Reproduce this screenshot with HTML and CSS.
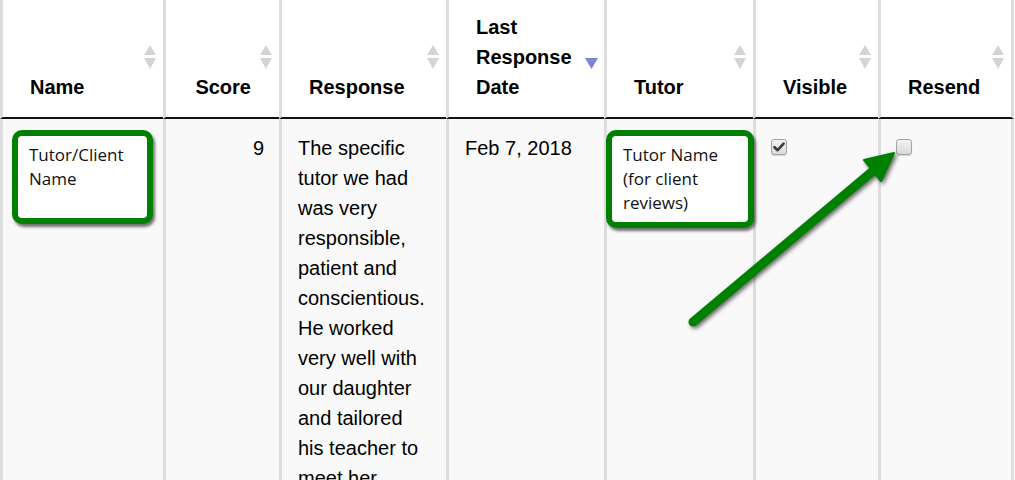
FILE: index.html
```html
<!DOCTYPE html>
<html>
<head>
<meta charset="utf-8">
<link rel="stylesheet" href="styles.css">
</head>
<body>
<div class="page">
  <table class="grid">
    <colgroup>
      <col class="c-name"><col class="c-score"><col class="c-resp"><col class="c-date"><col class="c-tutor"><col class="c-vis"><col class="c-resend">
    </colgroup>
    <thead>
      <tr>
        <th>Name<span class="sort"><svg width="12" height="24" viewBox="0 0 12 24"><path d="M0 10 L6 0 L12 10Z M0 13 L12 13 L6 24Z" fill="#d4d4d4"/></svg></span></th>
        <th class="num">Score<span class="sort"><svg width="12" height="24" viewBox="0 0 12 24"><path d="M0 10 L6 0 L12 10Z M0 13 L12 13 L6 24Z" fill="#d4d4d4"/></svg></span></th>
        <th>Response<span class="sort"><svg width="12" height="24" viewBox="0 0 12 24"><path d="M0 10 L6 0 L12 10Z M0 13 L12 13 L6 24Z" fill="#d4d4d4"/></svg></span></th>
        <th>Last Response Date<span class="sort sorted"><svg width="13" height="11" viewBox="0 0 13 11"><path d="M0 0 L13 0 L6.5 11Z" fill="#7e80dc"/></svg></span></th>
        <th>Tutor<span class="sort"><svg width="12" height="24" viewBox="0 0 12 24"><path d="M0 10 L6 0 L12 10Z M0 13 L12 13 L6 24Z" fill="#d4d4d4"/></svg></span></th>
        <th>Visible<span class="sort"><svg width="12" height="24" viewBox="0 0 12 24"><path d="M0 10 L6 0 L12 10Z M0 13 L12 13 L6 24Z" fill="#d4d4d4"/></svg></span></th>
        <th class="last">Resend<span class="sort"><svg width="12" height="24" viewBox="0 0 12 24"><path d="M0 10 L6 0 L12 10Z M0 13 L12 13 L6 24Z" fill="#d4d4d4"/></svg></span></th>
      </tr>
    </thead>
    <tbody>
      <tr>
        <td></td>
        <td class="num">9</td>
        <td class="resp">The specific tutor we had was very responsible, patient and conscientious. He worked very well with our daughter and tailored his teacher to meet her needs. We would recommend him to anyone.</td>
        <td>Feb 7, 2018</td>
        <td></td>
        <td><span class="check checked"><svg width="12" height="10" viewBox="0 0 12 10"><path d="M1.5 5.2 L4.6 8.2 L10.6 1.6" fill="none" stroke="#3a3a3a" stroke-width="2.6" stroke-linecap="round" stroke-linejoin="round"/></svg></span></td>
        <td class="last"><span class="check"></span></td>
      </tr>
    </tbody>
  </table>

  <div class="callout callout-name">Tutor/Client Name</div>
  <div class="callout callout-tutor">Tutor Name (for client reviews)</div>

  <svg class="arrow" width="1015" height="480" viewBox="0 0 1015 480">
    <g class="arrow-g">
      <line x1="693" y1="322" x2="874" y2="170" stroke="#008000" stroke-width="9" stroke-linecap="round"/>
      <polygon points="894,153 881,181 864,160" fill="#008000" stroke="#008000" stroke-width="2" stroke-linejoin="round"/>
    </g>
  </svg>
</div>
</body>
</html>
```
FILE: styles.css
```css
html, body {
  margin: 0;
  padding: 0;
  overflow: hidden;
  background: #ffffff;
}

.page {
  position: relative;
  width: 1015px;
  height: 480px;
  overflow: hidden;
  font-family: "Liberation Sans", Arial, sans-serif;
  color: #000;
}

.grid {
  border-collapse: separate;
  border-spacing: 0;
  table-layout: fixed;
  width: 1014px;
}

.c-name { width: 163px; }
.c-score { width: 116px; }
.c-resp { width: 167px; }
.c-date { width: 158px; }
.c-tutor { width: 149px; }
.c-vis { width: 125px; }
.c-resend { width: 136px; }

.grid th {
  position: relative;
  background: #ffffff;
  border-left: 3px solid #dddddd;
  border-bottom: 2px solid #111111;
  padding: 12px 28px 15px 27px;
  font-size: 20px;
  font-weight: bold;
  line-height: 30px;
  text-align: left;
  vertical-align: bottom;
  height: 90px;
}

.grid th.num {
  text-align: right;
}

.grid th.last,
.grid td.last {
  border-right: 3px solid #dddddd;
}

.sort {
  position: absolute;
  right: 7px;
  top: 45px;
  width: 12px;
  height: 24px;
  line-height: 0;
  filter: blur(0.4px);
}

.sort.sorted {
  right: 6px;
  top: 58px;
  width: 13px;
  height: 11px;
}

.grid td {
  background: #f9f9f9;
  border-left: 3px solid #dddddd;
  padding: 14px 15px 15px 16px;
  font-size: 20px;
  line-height: 30px;
  vertical-align: top;
  height: 400px;
}

.grid td.num {
  text-align: right;
}

.grid td.resp {
  padding-right: 22px;
}

.check {
  display: block;
  box-sizing: border-box;
  width: 16px;
  height: 16px;
  margin: 6px 0 0 -1px;
  border: 1px solid #a3a3a3;
  border-radius: 3px;
  background: linear-gradient(#f2f2f2, #dadada);
  box-shadow: 0 1px 1px rgba(0, 0, 0, 0.15);
  line-height: 0;
}

.check svg {
  margin: 2px 0 0 1px;
}

.callout {
  position: absolute;
  box-sizing: border-box;
  background: #ffffff;
  border: 6px solid #008000;
  border-radius: 10px;
  box-shadow: 2px 3px 3px rgba(0, 0, 0, 0.55);
  padding: 7px 6px 0 11px;
  font-family: "Open Sans", "Noto Sans", sans-serif;
  font-size: 17px;
  line-height: 24px;
  color: #111;
}

.callout-name {
  left: 12px;
  top: 130px;
  width: 141px;
  height: 94px;
}

.callout-tutor {
  left: 606px;
  top: 130px;
  width: 148px;
  height: 98px;
}

.arrow {
  position: absolute;
  left: 0;
  top: 0;
  pointer-events: none;
}

.arrow-g {
  filter: drop-shadow(2px 2px 2px rgba(0, 0, 0, 0.6));
}
```
